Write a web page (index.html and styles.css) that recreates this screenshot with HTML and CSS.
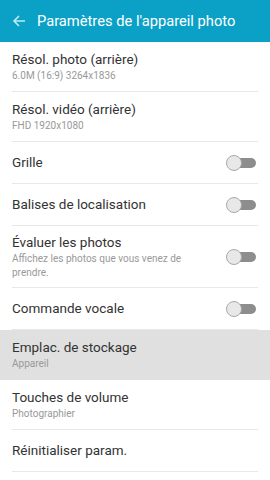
FILE: index.html
```html
<!DOCTYPE html>
<html lang="fr">
<head>
  <meta charset="UTF-8" />
  <meta name="viewport" content="width=device-width, initial-scale=1.0"/>
  <title>Paramètres de l'appareil photo</title>
  <link rel="stylesheet" href="styles.css">
</head>
<body>
  <!-- Top bar -->
  <div class="app-bar">
    <svg class="back" width="14" height="14" viewBox="0 0 14 14">
      <path d="M13 7H2M7 2L2 7l5 5" fill="none" stroke="#bfeaf5" stroke-width="1.6"/>
    </svg>
    <div class="app-title">Paramètres de l'appareil photo</div>
  </div>

  <!-- Settings list -->
  <div class="list">
    <div class="item two">
      <div class="item-text">
        <div class="item-title">Résol. photo (arrière)</div>
        <div class="item-sub">6.0M (16:9) 3264x1836</div>
      </div>
    </div>
    <div class="item two">
      <div class="item-text">
        <div class="item-title">Résol. vidéo (arrière)</div>
        <div class="item-sub">FHD 1920x1080</div>
      </div>
    </div>
    <div class="item">
      <div class="item-text">
        <div class="item-title">Grille</div>
      </div>
      <div class="switch"><span class="knob"></span></div>
    </div>
    <div class="item">
      <div class="item-text">
        <div class="item-title">Balises de localisation</div>
      </div>
      <div class="switch"><span class="knob"></span></div>
    </div>
    <div class="item three">
      <div class="item-text">
        <div class="item-title">Évaluer les photos</div>
        <div class="item-sub">Affichez les photos que vous venez de prendre.</div>
      </div>
      <div class="switch"><span class="knob"></span></div>
    </div>
    <div class="item">
      <div class="item-text">
        <div class="item-title">Commande vocale</div>
      </div>
      <div class="switch"><span class="knob"></span></div>
    </div>
    <div class="item two pressed">
      <div class="item-text">
        <div class="item-title">Emplac. de stockage</div>
        <div class="item-sub">Appareil</div>
      </div>
    </div>
    <div class="item two">
      <div class="item-text">
        <div class="item-title">Touches de volume</div>
        <div class="item-sub">Photographier</div>
      </div>
    </div>
    <div class="item">
      <div class="item-text">
        <div class="item-title">Réinitialiser param.</div>
      </div>
    </div>
  </div>
</body>
</html>
```

FILE: styles.css
```css
* {
  margin: 0;
  padding: 0;
  box-sizing: border-box;
}

body {
  font-family: Roboto, 'Noto Sans', sans-serif;
  background: #fff;
  color: #333;
  width: 270px;
  height: 480px;
  overflow: hidden;
}

.app-bar {
  height: 42px;
  background: #0ba1c7;
  display: flex;
  align-items: center;
  padding-left: 12px;
  gap: 11px;
}

.back {
  flex: none;
}

.app-title {
  color: #fff;
  font-size: 14.7px;
  white-space: nowrap;
}

.list {
  display: flex;
  flex-direction: column;
}

.item {
  height: 42px;
  display: flex;
  align-items: center;
  padding: 0 12px;
  position: relative;
}

.item::after {
  content: "";
  position: absolute;
  left: 12px;
  right: 12px;
  bottom: 0;
  height: 1px;
  background: #e8e8e8;
}

.item.two {
  height: 50px;
}

.item.three {
  height: 62px;
}

.item.pressed {
  background: #e0e0e0;
}

.item.pressed::after {
  display: none;
}

.item-text {
  flex: 1;
  padding-bottom: 1px;
}

.item-title {
  font-size: 13.5px;
  color: #333;
  line-height: 17px;
}

.item-sub {
  font-size: 10px;
  color: #999;
  line-height: 14px;
  margin-top: 1px;
  max-width: 195px;
}

.switch {
  width: 29px;
  height: 10px;
  border-radius: 5px;
  background: #8d8d8d;
  position: relative;
  margin-right: 2px;
  flex: none;
}

.knob {
  position: absolute;
  left: -1px;
  top: -3px;
  width: 16px;
  height: 16px;
  border-radius: 50%;
  background: #e8e8e8;
  border: 1px solid #a9a9a9;
}
```
